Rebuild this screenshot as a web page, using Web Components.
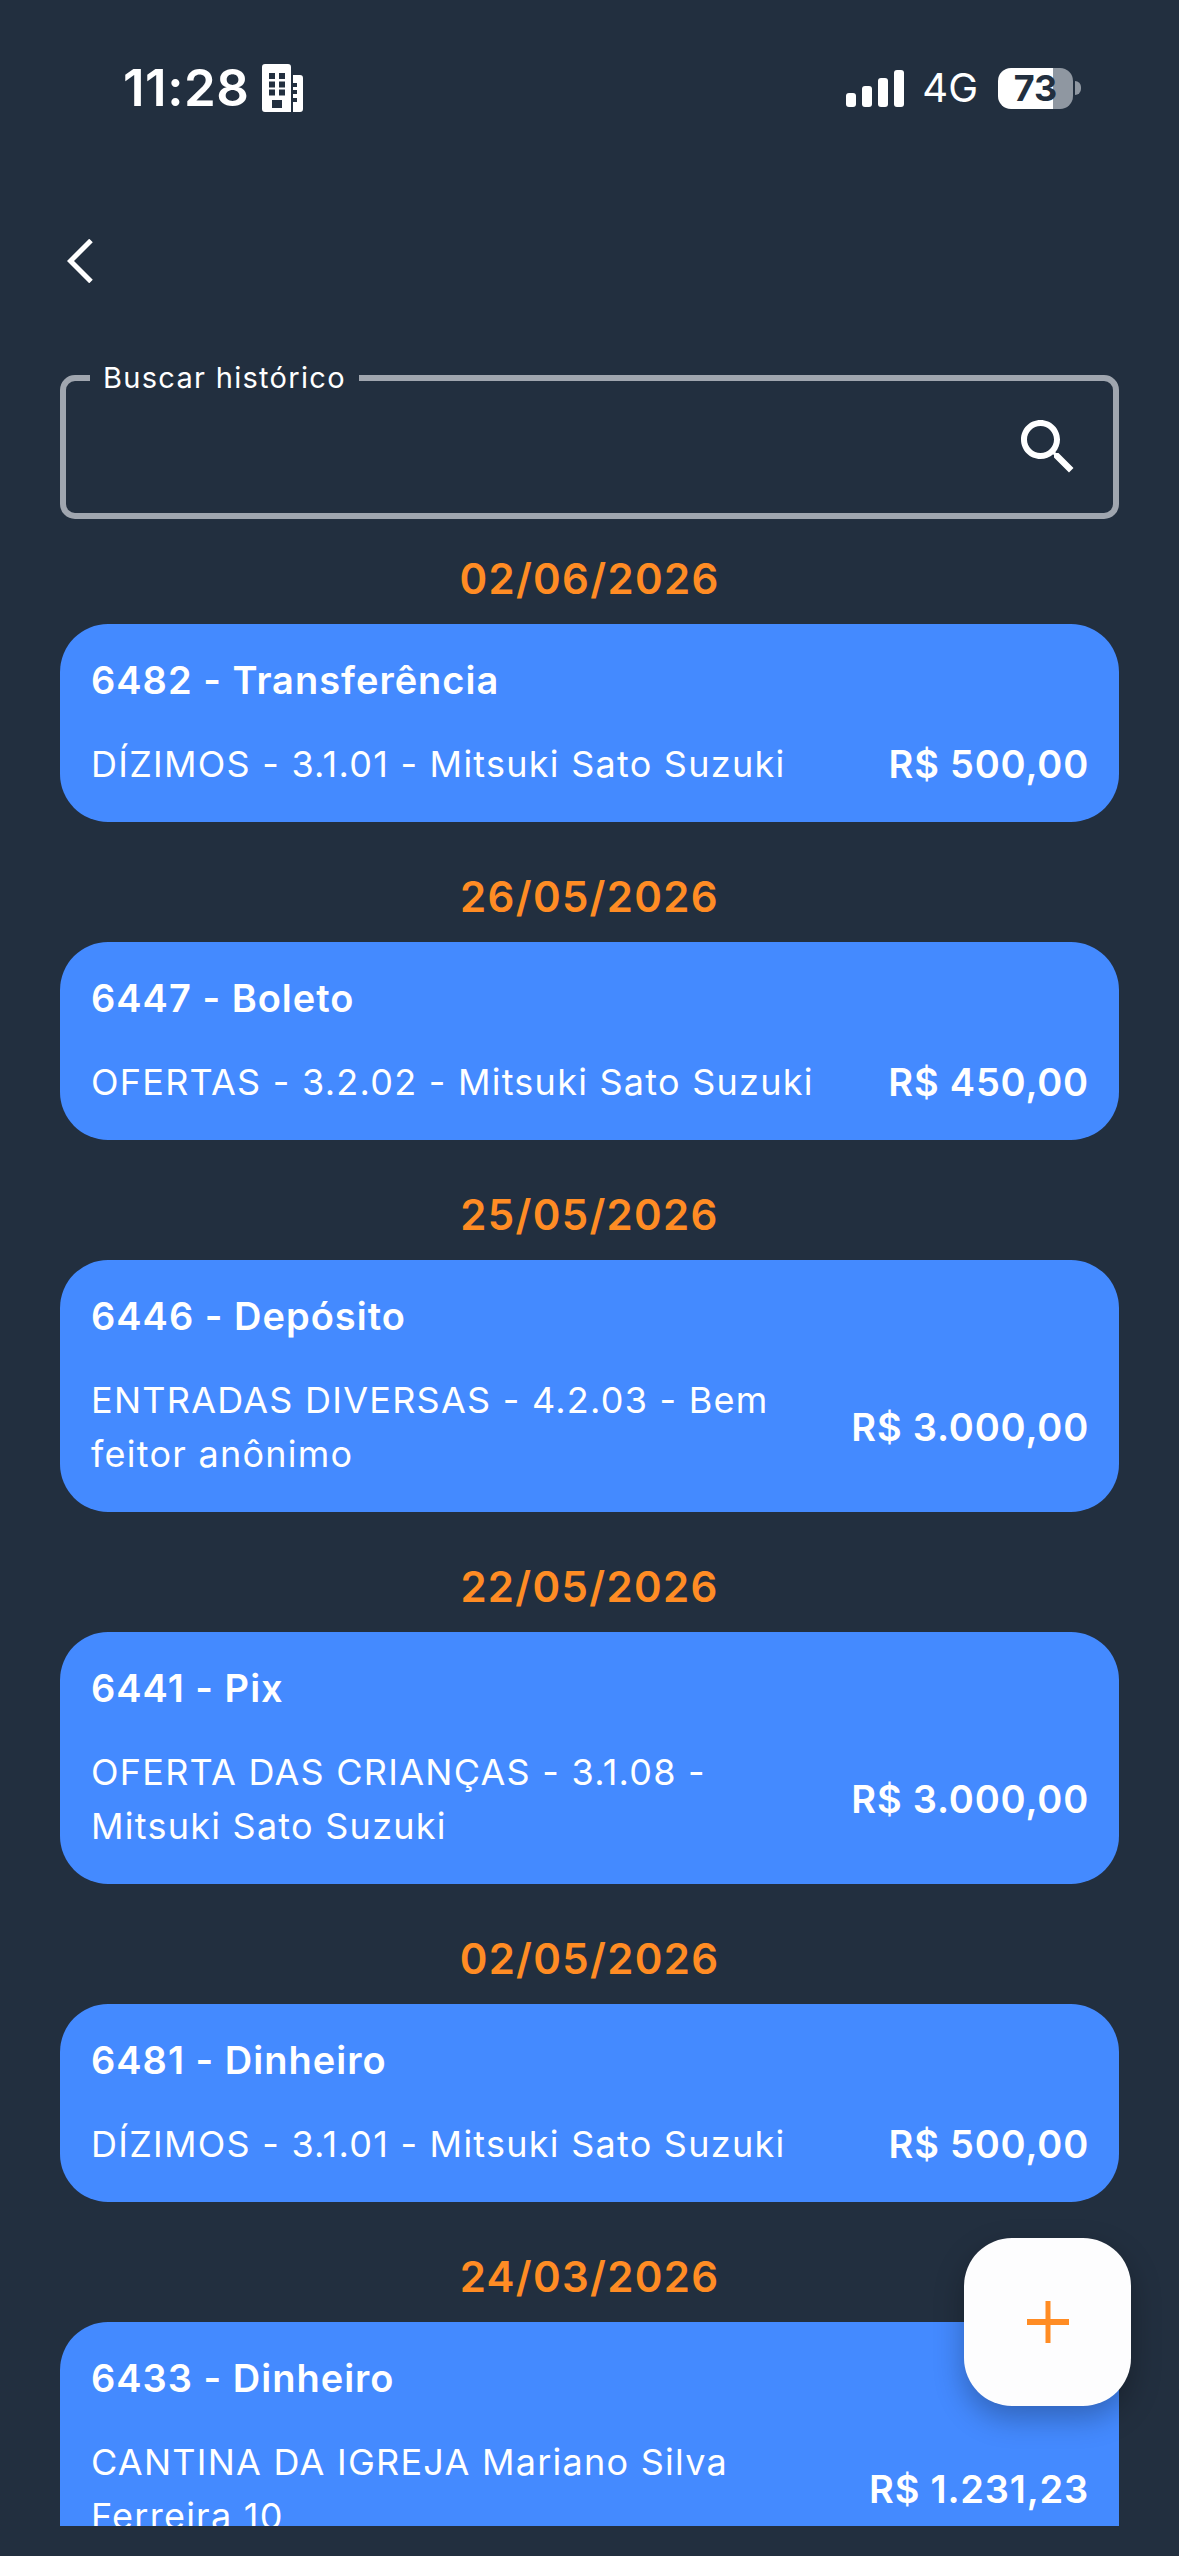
<!DOCTYPE html>
<html lang="pt-BR">
<head>
<meta charset="utf-8">
<title>Histórico</title>
<style>
  html, body { margin: 0; height: 100%; background: #222f3f; }
  body { font-family: Inter, "Liberation Sans", sans-serif; color: #fff; }
  date-heading:first-of-type { margin-top: 0; }
</style>
</head>
<body>
<history-screen>
  <status-bar slot="status" time="11:28" network="4G" battery="73"></status-bar>
  <back-button slot="nav"></back-button>
  <search-field slot="search" label="Buscar histórico"></search-field>

  <date-heading>02/06/2026</date-heading>
  <history-card heading="6482 - Transferência" amount="R$ 500,00">DÍZIMOS - 3.1.01 - Mitsuki Sato Suzuki</history-card>

  <date-heading>26/05/2026</date-heading>
  <history-card heading="6447 - Boleto" amount="R$ 450,00">OFERTAS - 3.2.02 - Mitsuki Sato Suzuki</history-card>

  <date-heading>25/05/2026</date-heading>
  <history-card heading="6446 - Depósito" amount="R$ 3.000,00">ENTRADAS DIVERSAS - 4.2.03 - Bem feitor anônimo</history-card>

  <date-heading>22/05/2026</date-heading>
  <history-card heading="6441 - Pix" amount="R$ 3.000,00">OFERTA DAS CRIANÇAS - 3.1.08 - Mitsuki Sato Suzuki</history-card>

  <date-heading>02/05/2026</date-heading>
  <history-card heading="6481 - Dinheiro" amount="R$ 500,00">DÍZIMOS - 3.1.01 - Mitsuki Sato Suzuki</history-card>

  <date-heading>24/03/2026</date-heading>
  <history-card heading="6433 - Dinheiro" amount="R$ 1.231,23">CANTINA DA IGREJA Mariano Silva Ferreira 10</history-card>

  <add-button slot="fab"></add-button>
</history-screen>

<script>
class HistoryScreen extends HTMLElement {
    constructor() {
        super();
        this.attachShadow({ mode: 'open' });
        this.shadowRoot.innerHTML = `
      <style>
        :host {
          display: flex;
          flex-direction: column;
          position: relative;
          height: 2556px;
          overflow: hidden;
          background: #222f3f;
        }
        .list {
          flex: 1;
          min-height: 0;
          margin: 33px 60px 30px;
          overflow: hidden;
        }
      </style>
      <slot name="status"></slot>
      <slot name="nav"></slot>
      <slot name="search"></slot>
      <div class="list"><slot></slot></div>
      <slot name="fab"></slot>
    `;
    }
}

class StatusBar extends HTMLElement {
    constructor() {
        super();
        this.attachShadow({ mode: 'open' });
        const time = this.getAttribute('time');
        const network = this.getAttribute('network');
        const battery = this.getAttribute('battery');
        this.shadowRoot.innerHTML = `
      <style>
        :host {
          display: flex;
          align-items: center;
          justify-content: space-between;
          height: 48px;
          padding: 64px 98px 0 123px;
          color: #fff;
        }
        .left, .right { display: flex; align-items: center; }
        .time {
          font-size: 51px;
          font-weight: 600;
          line-height: 48px;
          letter-spacing: 0.5px;
        }
        .left svg { margin-left: 13px; display: block; }
        .right svg { display: block; }
        .network {
          margin: 0 20px 0 18px;
          font-size: 40px;
          font-weight: 400;
          line-height: 48px;
        }
        .battery {
          width: 75px;
          height: 41px;
          border-radius: 13px;
          background: linear-gradient(90deg, #fff 73%, #8f97a1 73%);
          color: #222f3f;
          font-size: 36px;
          font-weight: 700;
          line-height: 41px;
          text-align: center;
        }
        .nub {
          width: 6px;
          height: 14px;
          margin-left: 2px;
          border-radius: 0 7px 7px 0;
          background: #8f97a1;
        }
      </style>
      <div class="left">
        <span class="time">${time}</span>
        <svg width="41" height="48" viewBox="0 0 41 48" fill="#fff">
          <path fill-rule="evenodd" d="M3 0h23a3 3 0 0 1 3 3v45H3a3 3 0 0 1-3-3V3a3 3 0 0 1 3-3zM7 9v6h6V9zm10 0v6h6V9zM7 17.500v6h6v-6zm10 0v6h6v-6zM7 25.500v6h6v-6zm10 0v6h6v-6zM10 36v8h10v-8z"/>
          <path fill-rule="evenodd" d="M31 11h7a3 3 0 0 1 3 3v31a3 3 0 0 1-3 3h-7zm0 8v4h4v-4zm0 7v4h4v-4zm0 8v4h4v-4z"/>
        </svg>
      </div>
      <div class="right">
        <svg width="58" height="37" viewBox="0 0 58 37" fill="#fff">
          <rect x="0" y="23" width="10" height="14" rx="3"/>
          <rect x="16" y="16" width="10" height="21" rx="3"/>
          <rect x="32" y="8" width="10" height="29" rx="3"/>
          <rect x="48" y="0" width="10" height="37" rx="3"/>
        </svg>
        <span class="network">${network}</span>
        <span class="battery">${battery}</span>
        <span class="nub"></span>
      </div>
    `;
    }
}

class BackButton extends HTMLElement {
    constructor() {
        super();
        this.attachShadow({ mode: 'open' });
        this.shadowRoot.innerHTML = `
      <style>
        :host {
          display: block;
          padding: 127px 0 92px 67px;
        }
        svg { display: block; }
      </style>
      <svg width="26" height="44" viewBox="0 0 26 44" fill="none" stroke="#fff" stroke-width="5">
        <path d="M24 1.500 3.500 22 24 42.500"/>
      </svg>
    `;
    }
}

class SearchField extends HTMLElement {
    constructor() {
        super();
        this.attachShadow({ mode: 'open' });
        this.shadowRoot.innerHTML = `
      <style>
        :host {
          display: block;
          position: relative;
          margin: 0 60px;
        }
        .box {
          display: flex;
          align-items: center;
          justify-content: flex-end;
          box-sizing: border-box;
          height: 144px;
          padding-right: 29px;
          border: 6px solid #a0a6af;
          border-radius: 15px;
        }
        input {
          flex: 1;
          min-width: 0;
          border: 0;
          outline: 0;
          background: none;
          color: #fff;
          font: inherit;
        }
        svg { display: block; flex: none; }
        label {
          position: absolute;
          top: -15px;
          left: 30px;
          padding: 0 13px;
          background: #222f3f;
          font-size: 29px;
          line-height: 36px;
          letter-spacing: 1.300px;
          color: #fff;
        }
      </style>
      <div class="box">
        <input id="q" type="text">
        <svg width="72" height="72" viewBox="0 0 24 24" fill="#fff">
          <path d="M15.500 14h-.79l-.28-.27C15.410 12.590 16 11.110 16 9.500 16 5.910 13.090 3 9.500 3S3 5.910 3 9.500 5.910 16 9.500 16c1.610 0 3.090-.59 4.230-1.570l.27.28v.79l5 4.990L20.490 19l-4.990-5zm-6 0C7.010 14 5 11.990 5 9.500S7.010 5 9.500 5 14 7.010 14 9.500 11.990 14 9.500 14z"/>
        </svg>
      </div>
      <label for="q">${this.getAttribute('label')}</label>
    `;
    }
}

class DateHeading extends HTMLElement {
    constructor() {
        super();
        this.attachShadow({ mode: 'open' });
        this.shadowRoot.innerHTML = `
      <style>
        :host {
          display: block;
          margin: 48px 0 18px;
          color: #ff8c24;
          font-size: 42px;
          font-weight: 600;
          line-height: 54px;
          letter-spacing: 1.300px;
          text-align: center;
        }
      </style>
      <slot></slot>
    `;
    }
}

class HistoryCard extends HTMLElement {
    constructor() {
        super();
        this.attachShadow({ mode: 'open' });
        this.shadowRoot.innerHTML = `
      <style>
        :host {
          display: block;
          box-sizing: border-box;
          padding: 32px 30px 31px 31px;
          border-radius: 48px;
          background: #448aff;
          color: #fff;
        }
        .title {
          font-size: 38px;
          font-weight: 600;
          line-height: 48px;
          letter-spacing: 1px;
          margin-bottom: 33px;
        }
        .row {
          display: flex;
          align-items: center;
          justify-content: space-between;
          gap: 50px;
        }
        .desc {
          flex: 1;
          min-width: 0;
          font-size: 36px;
          line-height: 54px;
          letter-spacing: 1.250px;
        }
        .amount {
          flex: none;
          font-size: 38px;
          font-weight: 600;
          line-height: 54px;
          letter-spacing: 0.800px;
        }
      </style>
      <div class="title">${this.getAttribute('heading')}</div>
      <div class="row">
        <div class="desc"><slot></slot></div>
        <div class="amount">${this.getAttribute('amount')}</div>
      </div>
    `;
    }
}

class AddButton extends HTMLElement {
    constructor() {
        super();
        this.attachShadow({ mode: 'open' });
        this.shadowRoot.innerHTML = `
      <style>
        :host {
          position: absolute;
          left: 964px;
          top: 2238px;
          display: flex;
          align-items: center;
          justify-content: center;
          width: 167px;
          height: 168px;
          border-radius: 48px;
          background: #fdfdfe;
          box-shadow: 0 12px 30px rgba(0, 0, 0, 0.28);
        }
        svg { display: block; }
      </style>
      <svg width="42" height="42" viewBox="0 0 42 42" fill="#ff8c24">
        <rect x="0" y="18" width="42" height="6"/>
        <rect x="18.500" y="0" width="5" height="42"/>
      </svg>
    `;
    }
}

customElements.define('history-screen', HistoryScreen);
customElements.define('status-bar', StatusBar);
customElements.define('back-button', BackButton);
customElements.define('search-field', SearchField);
customElements.define('date-heading', DateHeading);
customElements.define('history-card', HistoryCard);
customElements.define('add-button', AddButton);
</script>
</body>
</html>
